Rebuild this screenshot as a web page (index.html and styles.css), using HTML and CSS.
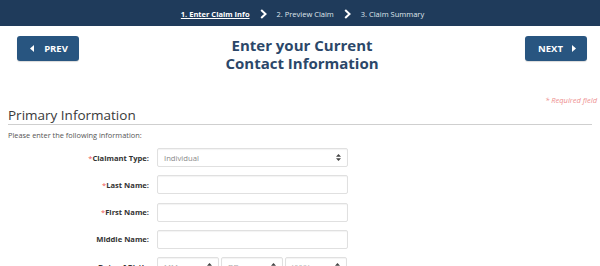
FILE: index.html
```html
<!DOCTYPE html>
<html>
<head>
<meta charset="utf-8">
<link rel="stylesheet" href="styles.css">
</head>
<body>
<nav class="steps">
  <span class="step active">1. Enter Claim Info</span>
  <svg class="chev" width="7" height="10" viewBox="0 0 7 10"><polyline points="1.2,1 5.5,5 1.2,9" fill="none" stroke="#fff" stroke-width="2"/></svg>
  <span class="step">2. Preview Claim</span>
  <svg class="chev" width="7" height="10" viewBox="0 0 7 10"><polyline points="1.2,1 5.5,5 1.2,9" fill="none" stroke="#fff" stroke-width="2"/></svg>
  <span class="step">3. Claim Summary</span>
</nav>
<header class="head">
  <button class="btn prev"><svg width="4" height="7" viewBox="0 0 4 7"><polygon points="4,0 0,3.5 4,7" fill="#fff"/></svg>PREV</button>
  <h1 class="title">Enter your Current<br>Contact Information</h1>
  <button class="btn next">NEXT<svg width="4" height="7" viewBox="0 0 4 7"><polygon points="0,0 4,3.5 0,7" fill="#fff"/></svg></button>
</header>
<div class="req">* Required field</div>
<section class="section">
  <h2 class="sec-title">Primary Information</h2>
  <p class="intro">Please enter the following information:</p>
  <div class="form">
    <label class="lbl"><span class="star">*</span>Claimant Type:</label>
    <div class="field sel"><span class="val">Individual</span><svg width="5" height="7" viewBox="0 0 5 7"><polygon points="2.5,0 5,2.8 0,2.8" fill="#444"/><polygon points="2.5,7 5,4.2 0,4.2" fill="#444"/></svg></div>
    <label class="lbl"><span class="star">*</span>Last Name:</label>
    <div class="field"></div>
    <label class="lbl"><span class="star">*</span>First Name:</label>
    <div class="field"></div>
    <label class="lbl">Middle Name:</label>
    <div class="field"></div>
    <label class="lbl">Date of Birth:</label>
    <div class="dob">
      <div class="field sel"><span class="ph">MM</span><svg width="5" height="7" viewBox="0 0 5 7"><polygon points="2.5,0 5,2.8 0,2.8" fill="#444"/><polygon points="2.5,7 5,4.2 0,4.2" fill="#444"/></svg></div>
      <div class="field sel"><span class="ph">DD</span><svg width="5" height="7" viewBox="0 0 5 7"><polygon points="2.5,0 5,2.8 0,2.8" fill="#444"/><polygon points="2.5,7 5,4.2 0,4.2" fill="#444"/></svg></div>
      <div class="field sel"><span class="ph">YYYY</span><svg width="5" height="7" viewBox="0 0 5 7"><polygon points="2.5,0 5,2.8 0,2.8" fill="#444"/><polygon points="2.5,7 5,4.2 0,4.2" fill="#444"/></svg></div>
    </div>
  </div>
</section>
</body>
</html>
```

FILE: styles.css
```css
* { box-sizing: border-box; }
html, body { margin: 0; padding: 0; background: #fff; }
body { font-family: "Open Sans", "DejaVu Sans", sans-serif; color: #333; overflow: hidden; }

.steps {
  height: 26px;
  background: #1f3b5b;
  display: flex;
  align-items: center;
  justify-content: center;
  gap: 10px;
  padding-left: 5px;
  padding-top: 2px;
}
.step { font-size: 7.5px; color: #dfe5ec; line-height: 10px; }
.step.active { color: #fff; font-weight: 700; text-decoration: underline; text-underline-offset: 1px; }
.chev { display: block; }

.head {
  display: flex;
  justify-content: space-between;
  align-items: flex-start;
  padding: 0 13px 0 17px;
  margin-top: 10px;
  height: 36px;
}
.btn {
  width: 62px;
  height: 25px;
  border: none;
  border-radius: 3px;
  background: #285580;
  color: #fff;
  font-family: "Open Sans", sans-serif;
  font-weight: 700;
  font-size: 9.5px;
  display: flex;
  align-items: center;
  justify-content: center;
  gap: 10px;
  padding: 0;
  box-shadow: 0 1px 1px rgba(0,0,0,0.15);
}
.prev { padding-left: 2px; }
.next { padding-left: 2px; gap: 9px; }
.title {
  margin: 1px 0 0;
  font-size: 15px;
  line-height: 17.5px;
  font-weight: 700;
  color: #2b4769;
  text-align: center;
}

.req {
  margin-top: 23px;
  text-align: right;
  padding-right: 3px;
  font-size: 7.5px;
  line-height: 10px;
  font-style: italic;
  color: #ee8f8f;
}

.section { padding: 0 8px; margin-top: 2px; }
.sec-title {
  margin: 0;
  font-size: 13.5px;
  line-height: 16px;
  font-weight: 400;
  color: #3a3a3a;
  padding-bottom: 1px;
  border-bottom: 1px solid #cfcfcf;
}
.intro {
  margin: 5px 0 0;
  font-size: 7.4px;
  line-height: 10px;
  color: #555;
}
.form {
  margin-top: 8px;
  display: grid;
  grid-template-columns: 141px 191px;
  column-gap: 8px;
  row-gap: 8.25px;
  align-items: center;
}
.lbl {
  text-align: right;
  font-size: 7.6px;
  font-weight: 700;
  color: #333;
  line-height: 10px;
}
.star { color: #e55; font-weight: 400; }
.field {
  height: 19px;
  border: 1px solid #e0e0e0;
  border-radius: 2px;
  background: #fff;
  box-shadow: inset 0 1px 1px rgba(0,0,0,0.05);
}
.sel {
  display: flex;
  align-items: center;
  justify-content: space-between;
  padding: 0 6px 0 6px;
  font-size: 7.7px;
  color: #8a8a8a;
}
.sel svg { display: block; }
.ph { color: #aaa; }
.dob {
  display: grid;
  grid-template-columns: 62px 62px 62px;
  column-gap: 2px;
}
```
